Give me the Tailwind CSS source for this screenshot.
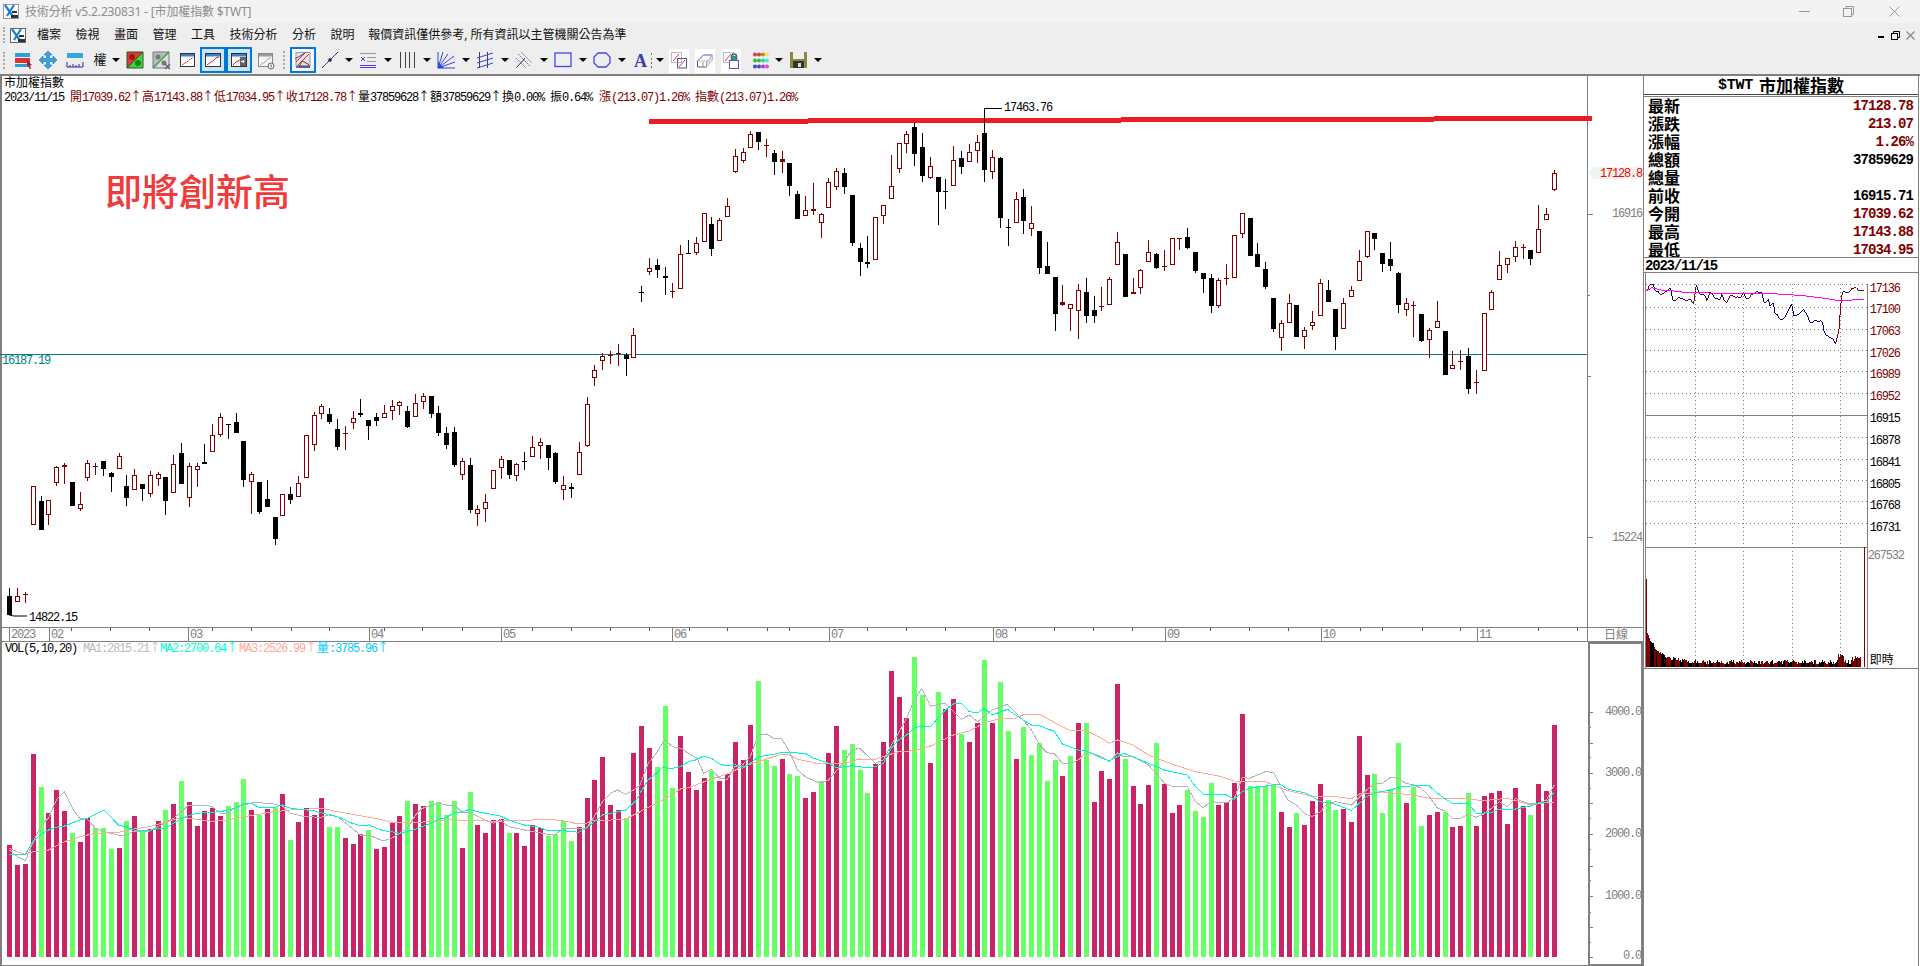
<!DOCTYPE html>
<html lang="zh-Hant">
<head>
<meta charset="UTF-8">
<title>技術分析 v5.2.230831 - [市加權指數 $TWT]</title>
<script src="https://cdn.jsdelivr.net/npm/@tailwindcss/browser@4"></script>
</head>
<body class="bg-white h-[966px] w-[1920px] overflow-hidden flex flex-col font-['Noto_Sans','Noto_Sans_CJK_TC',sans-serif]">

<!-- title bar -->
<div class="h-[23px] bg-[#f3f3f3] flex items-center relative shrink-0">
  <svg class="ml-[3px] w-[16px] h-[15px]" viewBox="0 0 16 15"><rect x=".5" y=".5" width="15" height="14" fill="#fff" stroke="#999"/><path d="M2 1l9 13M11 1L4 12" stroke="#1d7fd0" stroke-width="2.2" fill="none"/><path d="M9 7h5v2H9zM8 11h7v3H8z" fill="#333"/></svg>
  <span class="ml-[6px] text-[12px] tracking-[-0.15px] text-[#8c8c8c] leading-none">技術分析 v5.2.230831 - [市加權指數 $TWT]</span>
  <div class="ml-auto flex items-center h-full">
    <span class="w-[11px] h-px bg-[#999] mr-[33px]"></span>
    <svg class="w-[11px] h-[11px] mr-[35px]" viewBox="0 0 11 11" fill="none" stroke="#999"><rect x=".5" y="2.5" width="8" height="8"/><path d="M3 2.5v-2h7.500v8h-2"/></svg>
    <svg class="w-[11px] h-[11px] mr-[20px]" viewBox="0 0 11 11" stroke="#999"><path d="M.5.500l10 10M10.500.500l-10 10"/></svg>
  </div>
</div>

<!-- menu bar -->
<div class="h-[24px] bg-[#eeeeee] flex items-center relative shrink-0 text-[12px] text-[#111]">
  <span class="ml-[3px] w-[3px] h-[16px] border-l-2 border-dotted border-[#aaa]"></span>
  <svg class="ml-[4px] w-[16px] h-[15px]" viewBox="0 0 16 15"><rect x=".5" y=".5" width="15" height="14" fill="#fff" stroke="#666"/><path d="M2 1l9 13M11 1L4 12" stroke="#1d7fd0" stroke-width="2.2" fill="none"/><path d="M9 7h5v2H9zM8 11h7v3H8z" fill="#333"/></svg>
  <div class="ml-[11px] flex gap-[14.5px]">
    <span>檔案</span><span>檢視</span><span>畫面</span><span>管理</span><span>工具</span><span>技術分析</span><span>分析</span><span>說明</span><span class="-ml-[1px]">報價資訊僅供參考, 所有資訊以主管機關公告為準</span>
  </div>
  <div class="ml-auto flex items-center mr-[3px] text-[#333]">
    <span class="w-[6px] h-[2px] bg-black mr-[7px] mt-[3px]"></span>
    <svg class="w-[9px] h-[9px] mr-[6px]" viewBox="0 0 9 9" fill="none" stroke="#000"><rect x=".5" y="2.500" width="6" height="6"/><path d="M2.500 2.500v-2h6v6h-2"/></svg>
    <svg class="w-[9px] h-[9px] mr-[2px]" viewBox="0 0 9 9" stroke="#888" stroke-width="1.200"><path d="M.5.500l8 8M8.500.500l-8 8"/></svg>
  </div>
</div>

<!-- tool bar -->
<div class="h-[29px] bg-[#eeeeee] border-b-2 border-[#808080] flex items-start shrink-0 pl-[3px] text-[13px] text-[#111]">
  <span class="mt-[5px] w-[3px] h-[17px] border-l-2 border-dotted border-[#aaa] mr-[3px]"></span>

  <span class="w-[26px] h-[26px]"><svg viewBox="0 0 26 26" class="w-full h-full"><rect x="6" y="6" width="15" height="4" fill="#2f9fd8"/><rect x="6" y="11" width="15" height="5" fill="#d8323c"/><rect x="6" y="17" width="15" height="3" fill="#2f9fd8"/><path d="M18 13l5 5-2 .5 1 3-1.500.5-1-3-1.500 1z" fill="#a0222a"/></svg></span>
  <span class="w-[26px] h-[26px]"><svg viewBox="0 0 26 26" class="w-full h-full"><path d="M13 4l4 4h-2.500v3.500H18V9l4 4-4 4v-2.500h-3.500V18H17l-4 4-4-4h2.500v-3.500H8V17l-4-4 4-4v2.500h3.500V8H9z" fill="#3aa2e0" stroke="#1c6fb0" stroke-width=".6"/></svg></span>
  <span class="w-[26px] h-[26px] ml-px"><svg viewBox="0 0 26 26" class="w-full h-full"><rect x="5" y="6" width="16" height="5" fill="#39a5dd"/><path d="M5 15v5h16v-5M8 18v2M11 17v3M14 18v2M17 17v3" fill="none" stroke="#2b2b99"/></svg></span>
  <span class="w-[22px] h-[26px] flex items-center justify-center pl-[2px]">權</span>
  <span class="w-[12px] h-[26px] flex items-center justify-center"><i class="w-0 h-0 border-x-[4px] border-x-transparent border-t-[4px] border-t-black"></i></span>
  <span class="w-[26px] h-[26px]"><svg viewBox="0 0 26 26" class="w-full h-full"><path d="M5 5h16L5 21z" fill="#d93c3c"/><path d="M21 5v16H5z" fill="#49d049"/><path d="M5 5h16v16H5zM21 5L5 21" fill="none" stroke="#1c5c1c"/><circle cx="10" cy="10" r="3" fill="#a11"/><circle cx="16" cy="16" r="3" fill="#0a8a0a"/></svg></span>
  <span class="w-[26px] h-[26px]"><svg viewBox="0 0 26 26" class="w-full h-full"><path d="M5 5h16L5 21z" fill="#b8b8c0"/><path d="M21 5v16H5z" fill="#dcdce0"/><path d="M5 5h16v16H5z" fill="none" stroke="#778"/><path d="M21 5L5 21" stroke="#38a838" stroke-width="1.500"/><circle cx="10" cy="10" r="2.500" fill="#777"/><circle cx="16" cy="16" r="2.500" fill="#777"/><path d="M17 17l5 5m0-5l-5 5" stroke="#667" stroke-width="1.500"/></svg></span>
  <span class="w-[26px] h-[26px]"><svg viewBox="0 0 26 26" class="w-full h-full"><rect x="6.500" y="6.500" width="14" height="13" fill="#fff" stroke="#333"/><rect x="7" y="7" width="13" height="2.500" fill="#3a7fd0"/><path d="M8 18l3-2 2-1 3-3 3-1" stroke="#d22" fill="none" stroke-dasharray="2 .7"/></svg></span>
  <span class="w-[26px] h-[26px] bg-[#cce4f7] border-2 border-[#0078d7]"><svg viewBox="2 2 22 22" class="w-full h-full"><rect x="5.500" y="6.500" width="15" height="13" fill="#fff" stroke="#333"/><rect x="6" y="7" width="14" height="2.500" fill="#3a7fd0"/><path d="M7 18l4-3 2-1 3-3 3-1" stroke="#d22" fill="none"/></svg></span>
  <span class="w-[26px] h-[26px] bg-[#cce4f7] border-2 border-[#0078d7]"><svg viewBox="2 2 22 22" class="w-full h-full"><rect x="5.500" y="6.500" width="15" height="13" fill="#fff" stroke="#333"/><rect x="6" y="7" width="14" height="2.500" fill="#3a7fd0"/><rect x="14" y="10" width="6" height="9" fill="#666"/><path d="M7 18l3-3 2-1 2-1" stroke="#d22" fill="none"/><path d="M15 14.500h3l-1-1.500M18 14.500l-1 1.500" stroke="#fff" fill="none"/></svg></span>
  <span class="w-[26px] h-[26px]"><svg viewBox="0 0 26 26" class="w-full h-full"><rect x="6.500" y="6.500" width="14" height="13" fill="#f5f5f5" stroke="#888"/><rect x="7" y="7" width="13" height="2.500" fill="#9a9aa5"/><path d="M8 18l3-2 2-1 3-3 3-1" stroke="#aaa" fill="none"/><circle cx="19" cy="19" r="3" fill="#eee" stroke="#667"/><path d="M19 17.500V19l1 1" stroke="#667" fill="none"/></svg></span>
  <span class="w-[12px] h-[26px] flex items-center justify-center"><i class="w-[3px] h-[18px] border-l-2 border-dotted border-[#aaa]"></i></span>
  <span class="w-[26px] h-[26px] bg-[#f7fbff] border-2 border-[#0078d7]"><svg viewBox="2 2 22 22" class="w-full h-full"><rect x="6" y="5.500" width="14" height="13" fill="#e4e4e4" stroke="#999"/><path d="M6 15L16 5M8 18L19 7" stroke="#e22" fill="none"/><path d="M5 12L15 6" stroke="#44c" fill="none"/><path d="M9 20l3-6 6 3 2 3z" fill="none" stroke="#733"/><path d="M6 20h14" stroke="#449" stroke-width="1.500"/></svg></span>

  <span class="w-[26px] h-[26px] ml-px"><svg viewBox="0 0 26 26" class="w-full h-full"><path d="M5 21L21 5" stroke="#3344bb"/><circle cx="13" cy="13" r="1.800" fill="#222"/><path d="M5 21l2-2M19 7l2-2" stroke="#222"/></svg></span>
  <span class="w-[12px] h-[26px] flex items-center justify-center"><i class="w-0 h-0 border-x-[4px] border-x-transparent border-t-[4px] border-t-black"></i></span>
  <span class="w-[26px] h-[26px]"><svg viewBox="0 0 26 26" class="w-full h-full"><path d="M5 6.500h16M12 10.500h9M12 14.500h9" stroke="#999"/><path d="M5 18.500h16M5 20.500h16" stroke="#4444dd"/><path d="M6 10l4 4m0-4l-4 4" stroke="#3344cc"/></svg></span>
  <span class="w-[13px] h-[26px] flex items-center justify-center"><i class="w-0 h-0 border-x-[4px] border-x-transparent border-t-[4px] border-t-black"></i></span>
  <span class="w-[26px] h-[26px]"><svg viewBox="0 0 26 26" class="w-full h-full"><path d="M6.500 5v16M11.500 5v16M15.500 5v16M20.500 5v16" stroke="#444"/></svg></span>
  <span class="w-[13px] h-[26px] flex items-center justify-center"><i class="w-0 h-0 border-x-[4px] border-x-transparent border-t-[4px] border-t-black"></i></span>
  <span class="w-[26px] h-[26px]"><svg viewBox="0 0 26 26" class="w-full h-full"><path d="M5 21V5M5 21L10 5M5 21L15 7M5 21L21 9M5 21l17-6M5 21h17" stroke="#3344dd" fill="none"/><path d="M5 21v-6l6 6z" fill="#3344dd"/></svg></span>
  <span class="w-[13px] h-[26px] flex items-center justify-center"><i class="w-0 h-0 border-x-[4px] border-x-transparent border-t-[4px] border-t-black"></i></span>
  <span class="w-[26px] h-[26px]"><svg viewBox="0 0 26 26" class="w-full h-full"><path d="M7.500 5v16M15.500 5v16" stroke="#444"/><path d="M5 11L21 6M5 16l16-5M5 21l16-5" stroke="#3344dd"/></svg></span>
  <span class="w-[13px] h-[26px] flex items-center justify-center"><i class="w-0 h-0 border-x-[4px] border-x-transparent border-t-[4px] border-t-black"></i></span>
  <span class="w-[26px] h-[26px]"><svg viewBox="0 0 26 26" class="w-full h-full"><path d="M5 21L14 12M7 7l12 12M10 5l11 11M5 11l10 10" stroke="#777" stroke-dasharray="2 1"/><path d="M6 20l8-9" stroke="#3344bb"/></svg></span>
  <span class="w-[13px] h-[26px] flex items-center justify-center"><i class="w-0 h-0 border-x-[4px] border-x-transparent border-t-[4px] border-t-black"></i></span>
  <span class="w-[26px] h-[26px]"><svg viewBox="0 0 26 26" class="w-full h-full"><rect x="5" y="6" width="16" height="13.500" fill="none" stroke="#4444ee" stroke-width="1.300"/></svg></span>
  <span class="w-[13px] h-[26px] flex items-center justify-center"><i class="w-0 h-0 border-x-[4px] border-x-transparent border-t-[4px] border-t-black"></i></span>
  <span class="w-[26px] h-[26px]"><svg viewBox="0 0 26 26" class="w-full h-full"><path d="M9 6h8l4 4v6l-4 4H9l-4-4v-6z" fill="none" stroke="#4444ee" stroke-width="1.300"/></svg></span>
  <span class="w-[13px] h-[26px] flex items-center justify-center"><i class="w-0 h-0 border-x-[4px] border-x-transparent border-t-[4px] border-t-black"></i></span>
  <span class="w-[26px] h-[26px]"><svg viewBox="0 0 26 26" class="w-full h-full"><text x="6" y="20" fill="#3d3d9e" font-size="18" font-weight="700" font-family="Liberation Serif">A</text><path d="M23.500 6v2M23.500 11v2" stroke="#3a3"/><path d="M23.500 15v2M23.500 19v2" stroke="#c44"/></svg></span>
  <span class="w-[12px] h-[26px] flex items-center justify-center"><i class="w-0 h-0 border-x-[4px] border-x-transparent border-t-[4px] border-t-black"></i></span>
  <span class="w-[26px] h-[26px]"><svg viewBox="0 0 26 26" class="w-full h-full"><rect x="3" y="2" width="20" height="24" fill="#fff"/><rect x="5.500" y="5.500" width="10" height="10" fill="none" stroke="#bbb"/><rect x="11.500" y="11.500" width="9" height="9.500" fill="none" stroke="#5555aa"/><path d="M7 14l6-7M13 20l6-7" stroke="#e33"/></svg></span>
  <span class="w-[26px] h-[26px]"><svg viewBox="0 0 26 26" class="w-full h-full"><rect x="3" y="2" width="20" height="24" fill="#fff"/><path d="M5.500 14l6-6h9l-6 7v5h-9z" fill="none" stroke="#5555aa"/><path d="M5.500 14h9M14.500 15l6-7v5l-6 7" fill="#ddd" stroke="#bbb"/><path d="M11 15v5" stroke="#a94"/></svg></span>
  <span class="w-[26px] h-[26px]"><svg viewBox="0 0 26 26" class="w-full h-full"><rect x="3" y="2" width="20" height="24" fill="#fff"/><rect x="5.500" y="5.500" width="10" height="10" fill="none" stroke="#bbb"/><path d="M7 14l6-7" stroke="#e33"/><rect x="11.500" y="13.500" width="9" height="8" fill="#fff" stroke="#5555aa"/><path d="M13.500 13v-3.500a2.500 2.500 0 015 0V13" fill="none" stroke="#3a6a8a" stroke-width="1.500"/><rect x="14" y="9" width="4" height="4" fill="#2e9a7a"/></svg></span>
  <span class="w-[28px] h-[26px] ml-[2px]"><svg viewBox="0 0 28 26" class="w-full h-full"><path d="M8 7.500h11" stroke="#8a5a5a"/><circle cx="9" cy="7.500" r="2" fill="#c44"/><circle cx="13" cy="7.500" r="2" fill="#c44"/><circle cx="17" cy="7.500" r="2" fill="#bb8844"/><circle cx="21" cy="7.500" r="2" fill="#ee3"/><circle cx="9" cy="13.500" r="2" fill="#3b3"/><circle cx="13" cy="13.500" r="2" fill="#3b3"/><circle cx="17" cy="13.500" r="2" fill="#3c9"/><circle cx="21" cy="13.500" r="2" fill="#3ee"/><circle cx="9" cy="19.500" r="2" fill="#44c"/><circle cx="13" cy="19.500" r="2" fill="#44c"/><circle cx="17" cy="19.500" r="2" fill="#a4c"/><circle cx="21" cy="19.500" r="2" fill="#f3e"/></svg></span>
  <span class="w-[10px] h-[26px] flex items-center justify-center"><i class="w-0 h-0 border-x-[4px] border-x-transparent border-t-[4px] border-t-black"></i></span>
  <span class="w-[28px] h-[26px]"><svg viewBox="0 0 28 26" class="w-full h-full"><path d="M6 5h17v16H6z" fill="#8a8a3c"/><rect x="9" y="5" width="11" height="7" fill="#eee"/><rect x="9" y="14" width="11" height="7" fill="#333"/><rect x="14" y="16" width="3" height="4" fill="#ddd"/></svg></span>
  <span class="w-[11px] h-[26px] flex items-center justify-center"><i class="w-0 h-0 border-x-[4px] border-x-transparent border-t-[4px] border-t-black"></i></span>
</div>

<!-- main -->
<div class="flex flex-1 min-h-0">
  <div class="w-[1643px] flex flex-col shrink-0 font-['Liberation_Mono','Noto_Sans_CJK_TC',monospace] text-[12px] tracking-[-1.2px]">
    <svg id="price" class="block overflow-visible" width="1643" height="551" viewBox="0 76 1643 551">
      <text x="105" y="206" fill="#ef3b3b" class="font-['Noto_Sans_CJK_TC',sans-serif] text-[37px] font-medium tracking-normal">即將創新高</text>
    </svg>
    <svg id="dates" class="block overflow-visible" width="1643" height="15" viewBox="0 627 1643 15"></svg>
    <svg id="vol" class="block overflow-visible" width="1643" height="324" viewBox="0 642 1643 324"></svg>
  </div>

  <aside class="w-[276px] border-x border-[#808080] flex flex-col shrink-0">
    <div class="h-[19px] border-b border-[#444] flex items-center justify-center font-bold text-[17px] leading-none text-black">
      <span class="font-['Liberation_Mono',monospace] text-[15px] mr-[6px] tracking-[-0.2px]">$TWT</span>市加權指數
    </div>
    <div class="h-[162px] mt-px border-t border-b border-[#808080] overflow-hidden pl-[4px] pr-[5px] text-[16px] font-bold leading-[18px] text-black [&>div]:h-[18px] [&>div]:flex [&>div]:justify-between [&_b]:font-['Liberation_Mono',monospace] [&_b]:text-[14px] [&_b]:tracking-[-0.9px]">
      <div><span>最新</span><b class="text-[#800000]">17128.78</b></div>
      <div><span>漲跌</span><b class="text-[#800000]">213.07</b></div>
      <div><span>漲幅</span><b class="text-[#800000]">1.26%</b></div>
      <div><span>總額</span><b>37859629</b></div>
      <div><span>總量</span><b></b></div>
      <div><span>前收</span><b>16915.71</b></div>
      <div><span>今開</span><b class="text-[#800000]">17039.62</b></div>
      <div><span>最高</span><b class="text-[#800000]">17143.88</b></div>
      <div><span>最低</span><b class="text-[#800000]">17034.95</b></div>
    </div>
    <div class="h-[15px] border-b border-[#808080] pl-[1px] pt-[2px] font-['Liberation_Mono',monospace] font-bold text-[14px] leading-[13px] tracking-[-1.2px] text-black">2023/11/15</div>
    <svg id="tick" class="block overflow-visible border-b border-[#808080] font-['Liberation_Mono','Noto_Sans_CJK_TC',monospace] text-[12px] tracking-[-1.2px]" width="274" height="396" viewBox="1644 272 274 396"></svg>
  </aside>
</div>

<script>
const NS = 'http://www.w3.org/2000/svg';
const GRAY = '#808080', MAROON = '#800000';

function el(svg, name, attrs) {
  const e = document.createElementNS(NS, name);
  for (const k in attrs) e.setAttribute(k, attrs[k]);
  svg.appendChild(e);
  return e;
}
function box(svg, x, y, w, h, fill) {
  return el(svg, 'rect', {x, y, width: w, height: h, fill, 'shape-rendering': 'crispEdges'});
}
// half width latin keeps the tracking, full width glyphs get 12px
function label(svg, x, y, str, fill, anchor) {
  const t = el(svg, 'text', {x, y: y + 4, fill, 'text-anchor': anchor || 'start'});
  str.split(/([^\x00-\x7f]+)/).forEach((run, i) => {
    if (!run) return;
    const s = el(t, 'tspan', i % 2 ? {class: "font-['Noto_Sans_CJK_TC',sans-serif] tracking-normal"} : {});
    s.textContent = run;
  });
  return t;
}

const price = document.getElementById('price');
const dates = document.getElementById('dates');
const vol = document.getElementById('vol');
const tick = document.getElementById('tick');

// [red?, wick top, body top, body bottom, wick bottom]
const candlesA = [[0,745,768,825,825],[1,745,767,781,781],[1,755,762,766,788],[1,439,439,553,553],[0,468,484,569,569],[1,481,481,523,555],[1,378,382,428,437],[1,370,376,382,432],[0,427,427,497,497],[1,456,493,506,512],[1,361,370,412,422],[1,369,378,382,405],[0,363,363,386,408],[0,396,400,410,456],[1,340,349,385,385],[0,405,438,473,497],[1,388,406,448,448],[0,432,432,446,483],[1,393,406,461,471],[1,396,401,412,437],[0,411,411,482,524],[1,346,371,454,454],[0,309,339,431,431],[1,369,379,472,500],[1,370,379,388,441],[0,312,367,372,372],[1,252,286,334,334],[1,220,232,284,290],[0,253,253,256,296],[0,219,246,278,278],[0,303,303,419,440],[1,396,403,424,521],[0,426,426,515,521],[0,420,477,500,500],[0,531,531,596,614],[1,463,463,526,526],[0,441,462,479,491],[1,408,430,470,470],[1,286,286,412,412],[1,217,226,314,332],[1,192,199,220,236],[0,205,222,245,251],[0,238,267,320,329],[1,258,280,282,329],[1,213,235,247,266],[0,177,220,224,230],[0,240,240,257,299],[0,220,232,242,257],[1,195,220,232,232],[1,181,199,211,239],[1,182,187,196,224],[0,198,213,261,263],[1,162,190,230,230],[1,160,169,184,208],[0,168,168,221,234],[0,198,220,278,287],[0,262,279,314,326],[0,262,276,375,380],[1,355,364,403,419],[0,354,375,509,518],[1,495,508,520,557],[1,462,487,505,545],[1,391,391,445,445],[1,348,358,382,416],[0,360,360,404,416],[1,368,373,406,422],[0,336,363,365,389],[1,288,322,349,349],[1,294,307,316,356],[0,315,315,353,389],[0,337,339,425,433],[1,408,436,449,479],[0,429,441,448,473],[1,306,337,403,403],[1,171,193,317,320],[1,75,91,112,137],[1,40,49,61,90],[1,33,45,49,71],[1,13,40,43,77],[0,40,45,56,107],[1,-36,-15,52,53]];
const candlesB = [[0,528,546,549,575],[1,445,475,485,495],[0,447,465,480,503],[0,472,498,503,555],[1,519,543,546,563],[1,405,433,536,536],[0,390,430,433,433],[1,381,400,428,434],[1,310,310,395,395],[0,322,343,416,437],[1,325,331,392,392],[1,265,289,320,320],[1,117,139,185,188],[1,114,127,152,158],[1,64,73,113,113],[0,66,66,96,120],[1,87,105,108,140],[0,120,129,155,194],[1,124,148,155,188],[0,159,159,227,257],[0,243,252,326,326],[1,258,301,316,316],[1,220,298,302,315],[1,308,313,338,384],[1,204,217,293,293],[1,175,184,230,239],[0,174,190,230,251],[0,255,255,398,407],[0,400,414,455,497],[0,378,456,461,473],[1,322,322,449,449],[1,286,286,317,342],[1,135,229,266,266],[1,100,100,176,188],[1,64,73,101,129],[0,38,51,131,167],[0,69,111,197,215],[1,141,169,203,206],[0,201,201,245,345],[0,207,243,246,296],[1,108,151,227,227],[0,123,144,170,191],[1,102,127,155,155],[1,75,97,122,159],[0,-3,69,179,215],[1,120,141,182,207],[0,141,144,323,353],[0,327,351,354,408],[1,246,268,338,338],[0,237,261,332,372],[1,288,340,355,378],[0,363,363,473,491],[0,396,468,491,491],[0,501,501,611,662],[1,525,577,584,588],[1,583,583,596,663],[1,522,541,602,686],[0,504,546,617,638],[0,558,600,617,638],[1,531,588,591,602],[1,502,508,584,584],[1,366,397,464,464],[0,432,432,560,560],[1,504,546,551,551],[1,477,481,533,552],[1,390,427,455,455],[0,429,432,473,476],[1,420,468,470,483],[1,384,385,464,464],[1,384,385,387,419],[0,354,381,413,417],[0,426,426,483,488],[0,489,489,506,549],[0,491,504,587,609],[1,504,511,587,594],[1,462,505,507,525],[1,376,376,503,503],[1,310,310,371,384],[0,324,324,437,437],[0,399,432,470,470],[0,457,477,530,537],[0,564,564,656,666],[1,630,640,683,722],[1,552,580,638,638],[0,585,585,680,680],[1,651,661,680,716],[1,603,637,647,659],[1,507,520,617,617],[0,510,540,575,575],[0,597,597,680,720],[1,564,580,656,656],[1,529,541,559,559],[1,420,454,512,512],[1,364,364,438,443],[0,369,369,386,420],[0,429,429,461,486],[0,396,447,467,483],[0,487,489,584,608],[1,564,580,598,617],[1,573,585,587,680],[0,612,612,693,695],[1,655,661,689,743],[1,573,634,652,652],[0,663,663,794,794],[1,723,764,773,773],[1,720,753,755,780],[0,714,738,836,851],[1,780,817,820,851],[1,610,610,781,781],[1,541,547,598,598],[1,423,466,508,508],[1,445,445,463,488],[1,393,412,439,455],[1,402,411,414,446],[0,420,420,446,464],[1,285,358,427,427],[1,294,313,328,328],[1,181,190,239,242]];

// positive: up day, negative: down day (top of bar)
const volumes = [675,735,732,402,-501,579,510,573,-639,666,594,-624,-624,-687,684,-603,588,-630,628,603,-570,552,-483,546,618,573,564,588,-558,-546,-477,570,-585,567,-564,522,-660,606,564,585,534,-621,-621,654,672,642,-630,687,681,609,588,-543,552,558,-543,-546,-585,-543,684,-516,615,639,600,597,-639,639,678,615,624,-648,-642,-604,-663,621,534,480,411,555,570,-594,399,318,
384,-441,-258,-504,348,456,510,474,-453,483,462,366,420,315,-183,-420,-438,417,-462,-468,534,516,-483,399,318,-390,-372,-450,-519,432,366,153,231,294,-111,-225,429,-216,267,237,-342,366,309,-120,309,-186,-333,417,-321,-405,-369,-483,-420,468,-408,309,-309,546,453,477,192,-417,498,552,495,-369,492,579,555,-510,-573,-591,-489,555,546,489,282,-498,-498,-498,-498,
576,621,-579,615,543,492,-540,-570,567,606,348,465,-462,-579,-507,-369,549,-501,-618,585,576,-575,621,618,-519,618,528,519,513,612,504,558,-585,492,513,315];

const barX = i => Math.round(9.4 + 7.8 * i);

// chart frames
box(price, 0, 76, 2, 551, GRAY);
box(price, 1587, 76, 1, 551, GRAY);
box(price, 0, 354, 1587, 1, '#008080');

// hand drawn resistance line
[[649, 808, 121.5], [808, 1121, 120.3], [1121, 1434, 119.3], [1434, 1592, 118.3]].forEach(s => {
  box(price, s[0], s[2] - 2.5, s[1] - s[0], 5, '#ed1c24');
});

candlesA.map(c => [c, 340]).concat(candlesB.map(c => [c, 110])).forEach((item, i) => {
  const [c, base] = item;
  const x = barX(i), color = c[0] ? MAROON : '#000';
  const top = base + c[2] / 3, bot = base + c[3] / 3;
  box(price, x, base + c[1] / 3, 1, (c[4] - c[1]) / 3, color);
  if (c[3] - c[2] < 9) {
    box(price, x - 2, top, 5, Math.max(1, bot - top), color);
  } else if (c[0]) {
    el(price, 'rect', {x: x - 1.5, y: Math.round(top) + .5, width: 4, height: Math.round(bot - top), fill: '#fff', stroke: MAROON, 'shape-rendering': 'crispEdges'});
  } else {
    box(price, x - 2, top, 5, bot - top, '#000');
  }
});

// high / low leaders
el(price, 'path', {d: 'M984.500 109V108.500H1002', stroke: '#000', fill: 'none'});
el(price, 'path', {d: 'M9 615L14 616H27', stroke: '#000', fill: 'none'});

label(price, 4, 83, '市加權指數', '#000');
const headerParts = [
  [4, '2023/11/15', '#000'],
  [70, '開17039.62↑高17143.88↑低17034.95↑收17128.78↑', MAROON],
  [358, '量37859628↑額37859629↑換0.00% 振0.64%', '#000'],
  [599, '漲(213.07)1.26% 指數(213.07)1.26%', MAROON]
];
headerParts.forEach(p => label(price, p[0], 97, p[1], p[2]));
label(price, 1004, 107, '17463.76', '#000');
label(price, 29, 617, '14822.15', '#000');
label(price, 2, 360, '16187.19', '#008080');

// price axis
el(price, 'polygon', {points: '1588,173 1594,167 1642,167 1642,179 1594,179', fill: '#eef5ee'});
label(price, 1642, 173, '17128.8', '#ff0000', 'end');
label(price, 1642, 213, '16916', GRAY, 'end');
label(price, 1642, 537, '15224', GRAY, 'end');
[[214, 5], [295, 2], [376, 3], [537, 5]].forEach(t => box(price, 1588, t[0], t[1], 1, GRAY));

// date axis
box(dates, 0, 627, 1643, 1, GRAY);
box(dates, 0, 641, 1643, 1, GRAY);
box(dates, 0, 627, 2, 15, GRAY);
box(dates, 1587, 627, 1, 15, GRAY);
[71,110,149,212,251,291,329,384,422,462,532,571,610,649,689,727,767,789,867,906,945,1015,1054,1093,1132,1210,1249,1288,1360,1382,1422,1460,1538,1577].forEach(x => box(dates, x, 628, 1, 3, '#555'));
[[9, '2023'], [49, '02'], [188, '03'], [369, '04'], [501, '05'], [672, '06'], [829, '07'], [993, '08'], [1165, '09'], [1321, '10'], [1477, '11']].forEach(d => {
  box(dates, d[0], 628, 1, 13, GRAY);
  label(dates, d[0] + 2, 634, d[1], GRAY);
});
label(dates, 1604, 635, '日線', GRAY);

// volume panel
box(vol, 0, 642, 2, 324, GRAY);
box(vol, 0, 965, 1643, 1, GRAY);
el(vol, 'rect', {x: 1589, y: 643, width: 53, height: 322, fill: 'none', stroke: GRAY, 'stroke-width': 2, 'shape-rendering': 'crispEdges'});

volumes.forEach((v, i) => {
  const up = v > 0, top = 620 + Math.abs(v) / 3;
  box(vol, barX(i) - 2, top, 5, 957 - top, up ? '#c92466' : '#66ff66');
});

const lines = {
  '#b4b4b4': [
    [23,690,45,712,62,722,80,670,99,620,119,593,138,540,158,515,180,570,195,595,214,597,234,625,254,635,290,645,310,645,329,633,366,633,386,620,425,595,445,575,462,555,501,555,520,560,540,580,557,580,577,560,625,547,672,552,692,558,712,580,748,590,788,592,807,583,827,590,863,625,883,645,903,645,939,663,959,655,979,640,998,625,1018,585,1035,565,1055,558,1074,550,1094,555,1113,555,1131,577,1150,577,1189,600,1209,610,1226,600,1246,620,1285,630,1322,638,1341,643,1361,643,1381,625,1417,625,1437,625,1456,590,1476,545,1496,520,1513,510,1533,523,1552,510,1568,495],
    [0,495,20,430,40,400,60,360,80,380,100,385,119,400,140,415,156,460,175,448,195,475,214,478,232,440,251,435,270,410,290,345,310,342,327,355,347,355,366,395,386,450,405,470,442,490,462,480,500,425,520,390,538,385,577,430,596,420,616,375,633,340,653,295,672,240,690,205,712,258,748,250,787,298,807,285,827,305,863,270,900,253,939,300,959,330,979,375,998,398,1016,402,1035,430,1055,430,1074,420,1094,395,1131,410,1150,425,1170,398,1185,410,1207,410,1246,435,1285,490,1302,498,1341,500,1361,545,1380,563,1398,545,1437,548,1456,535,1476,472,1493,475,1532,455,1552,457,1568,495],
    [0,500,20,540,40,555,60,580,79,590,99,575,116,550,136,545,175,555,212,510,232,490,251,490,271,472,290,475,307,490,327,495,347,505,366,530,386,565,403,572,422,595,442,595,462,582,481,592,499,582,518,565,538,545,557,560,577,535,594,545,614,552,633,550,653,540,672,495]
  ],
  '#ffa898': [
    [23,685,45,697,62,703,80,695,119,690,158,665,195,650,234,640,290,637,329,627,366,620,405,607,445,592,481,598,520,604,557,600,596,590,672,575,712,570,788,565,827,575,883,587,939,600,959,607,1018,607,1055,605,1113,597,1131,603,1170,600,1209,605,1265,600,1304,600,1341,597,1381,603,1417,612,1437,610,1456,600,1496,600,1533,597,1568,575],
    [0,575,40,550,79,525,99,507,119,503,175,477,214,462,251,440,290,425,327,410,347,403,366,405,386,418,442,432,501,430,538,417,577,418,633,395,672,392,712,378,768,345,807,333,844,308,883,296,920,295,939,284,979,283,1016,308,1055,333,1094,332,1131,355,1150,370,1170,360,1207,375,1246,405,1302,432,1361,455,1417,468,1456,483,1532,485,1568,503],
    [0,505,40,518,79,528,136,530,175,536,195,522,251,516,327,525,366,535,442,535,499,542,557,535,614,555,653,548,672,548]
  ],
  '#00f5d0': [
    [23,705,62,703,80,665,99,645,119,630,138,622,158,618,195,600,214,595,254,570,271,590,290,615,310,622,329,630,366,633,386,625,405,625,425,610,445,595,481,580,540,575,577,565,596,552,616,550,636,563,672,563,692,555,712,565,768,572,807,585,827,590,863,610,883,617,903,615,939,632,959,635,979,640,1018,628,1055,610,1074,597,1094,593,1113,577,1131,577,1150,568,1170,575,1226,588,1246,600,1285,615,1322,622,1341,632,1381,632,1417,637,1437,625,1456,605,1476,585,1496,580,1533,570,1552,550,1568,525],
    [0,520,20,480,40,460,55,443,79,445,99,440,119,425,136,420,156,408,175,415,195,432,214,438,232,433,251,445,270,430,290,410,327,403,347,397,405,400,425,415,462,430,481,443,520,437,557,443,577,440,596,430,616,385,633,360,653,345,672,325,690,318,712,320,748,270,768,252,787,250,807,275,827,278,844,265,863,285,900,268,939,300,959,315,979,317,1016,335,1035,372,1074,390,1094,392,1131,415,1150,422,1185,400,1207,410,1246,430,1285,450,1302,455,1341,465,1361,500,1380,522,1417,522,1437,525,1456,538,1476,515,1493,505,1532,498,1552,495,1568,492],
    [0,493,20,508,60,518,79,530,99,545,136,553,175,572,212,530,232,518,271,510,290,502,327,497,366,498,386,520,403,535,422,550,462,552,481,580,518,578,538,567,577,567,614,558,633,548,653,548,672,515]
  ]
};
Object.keys(lines).forEach(color => {
  lines[color].forEach((seg, s) => {
    const pts = [];
    for (let i = 0; i < seg.length; i += 2) pts.push((s * 640 + seg[i] / 2.45).toFixed(1) + ',' + (620 + seg[i + 1] / 3).toFixed(1));
    el(vol, 'polyline', {points: pts.join(' '), fill: 'none', stroke: color, 'shape-rendering': 'crispEdges'});
  });
});

label(vol, 5, 648, 'VOL(5,10,20)', '#000');
label(vol, 83, 648, 'MA1:2815.21↑', '#bbbbbb');
label(vol, 160, 648, 'MA2:2700.64↑', '#00ffcc');
label(vol, 239, 648, 'MA3:2526.99↑', '#ffaa99');
label(vol, 317, 648, '量:3785.96↑', '#00ccff');

[[4000, 711], [3000, 772], [2000, 833], [1000, 895]].forEach(a => label(vol, 1641, a[1], a[0] + '.0', GRAY, 'end'));
label(vol, 1641, 955, '0.0', GRAY, 'end');
[277,322,368,412,460,505,550,595,642,688,737,781,829,875,920,965,1012].forEach((y, i) => {
  box(vol, 1590, 620 + y / 3, i % 2 ? 1 : 3, 1, GRAY);
});

// intraday panel, coordinates read at 3x from 1640,260
const tx = x => 1640 + x / 3, ty = y => 260 + y / 3;
box(tick, 1645, 272, 1, 396, GRAY);
box(tick, 1867, 283, 1, 385, GRAY);
box(tick, 1645, 414, 222, 1, GRAY);
box(tick, 1645, 547, 222, 1, GRAY);
[68, 137, 203, 268, 331, 397, 529, 595, 661, 724, 790].forEach(y => {
  el(tick, 'path', {d: 'M1646 ' + (Math.round(ty(y)) + .5) + 'H1867', stroke: '#777', 'stroke-dasharray': '1 3', 'shape-rendering': 'crispEdges'});
});
[166, 310, 457, 601].forEach(x => {
  el(tick, 'path', {d: 'M' + (Math.round(tx(x)) + .5) + ' 283V667', stroke: '#777', 'stroke-dasharray': '1 3', 'shape-rendering': 'crispEdges'});
});

[['17136', 80], ['17100', 145], ['17063', 211], ['17026', 277], ['16989', 340], ['16952', 406]].forEach(l => label(tick, 1870, ty(l[1]), l[0], MAROON));
[['16915', 472], ['16878', 538], ['16841', 604], ['16805', 670], ['16768', 733], ['16731', 799]].forEach(l => label(tick, 1870, ty(l[1]), l[0], '#000'));
label(tick, 1868, ty(883), '267532', GRAY);
label(tick, 1870, ty(1200), '即時', '#000');

// volume histogram
let seed = 17;
const rnd = () => (seed = (seed * 73 + 41) % 1009) / 1009;
let runLeft = 0, runColor = '#000';
for (let x = 1646; x < 1861; x++) {
  const d = x - 1647;
  let h = 3 + rnd() * 4 + 28 * Math.exp(-d / 12);
  if (x > 1837 && x < 1844) h += 6;
  if (x > 1850) h += 2 + (x - 1850) / 2.5;
  if (x === 1646) h = 88;
  if (runLeft-- <= 0) {
    runLeft = Math.floor(rnd() * 5);
    runColor = runColor === '#000' ? MAROON : '#000';
  }
  box(tick, x, 667 - h, 1, h, runColor);
}
box(tick, 1864, 547, 1, 120, MAROON);

// average and last price
const avg = [18,90,35,80,60,87,100,90,140,95,250,97,360,97,430,100,490,104,560,113,600,120,640,117,672,115];
let avgPts = [];
for (let i = 0; i < avg.length; i += 2) avgPts.push(tx(avg[i]).toFixed(1) + ',' + ty(avg[i + 1]).toFixed(1));

const read = [20,90,28,72,38,70,45,90,60,100,75,92,90,80,98,118,115,110,130,115,150,115,160,130,168,73,178,100,195,105,200,120,210,92,225,112,240,115,245,100,258,125,270,105,285,110,300,112,310,95,320,115,335,100,350,90,365,95,372,125,385,115,390,135,400,125,405,155,420,175,430,175,442,155,455,130,462,165,475,160,490,145,500,160,510,183,530,178,548,185,553,215,570,230,580,235,587,250,597,210,603,130,608,92,625,97,637,82,650,80,657,90,672,88];
// the feed jitters between the points read off the picture
const last = [read[0], read[1]];
for (let i = 2; i < read.length; i += 2) {
  const x0 = read[i - 2], x1 = read[i], y0 = read[i - 1], y1 = read[i + 1];
  const amp = x1 < 372 ? 12 : x1 < 590 ? 8 : 0;
  const steps = amp ? Math.max(1, Math.floor((x1 - x0) / 6)) : 1;
  for (let s = 1; s <= steps; s++) {
    const f = s / steps;
    last.push(x0 + (x1 - x0) * f, y0 + (y1 - y0) * f + (s < steps ? (rnd() - .5) * amp : 0));
  }
}
for (let i = 2; i < last.length; i += 2) {
  const up = last[i + 1] < last[i - 1];
  const early = last[i] < 372;
  el(tick, 'line', {x1: tx(last[i - 2]), y1: ty(last[i - 1]), x2: tx(last[i]), y2: ty(last[i + 1]), stroke: up && (early || last[i] > 590) ? MAROON : '#000080', 'shape-rendering': 'crispEdges'});
}
el(tick, 'polyline', {points: avgPts.join(' '), fill: 'none', stroke: '#ff00ff', 'shape-rendering': 'crispEdges'});
</script>
</body>
</html>
